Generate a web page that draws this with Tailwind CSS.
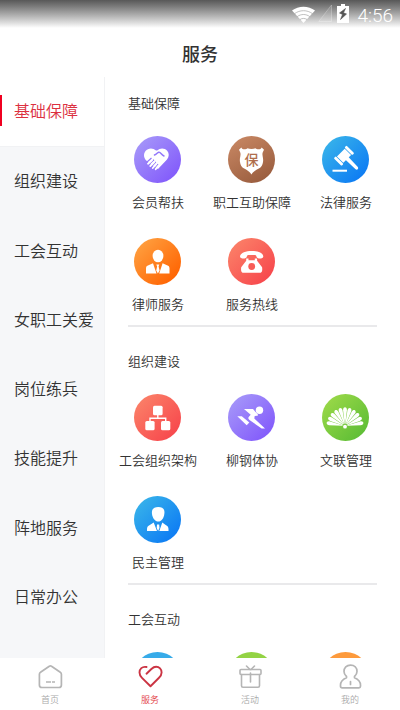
<!DOCTYPE html>
<html lang="zh-CN">
<head>
<meta charset="utf-8">
<meta name="viewport" content="width=device-width, initial-scale=1">
<title>服务</title>
<script src="https://cdn.jsdelivr.net/npm/@tailwindcss/browser@4"></script>
</head>
<body class="flex h-screen flex-col overflow-hidden bg-white font-['Noto_Sans_CJK_SC',sans-serif] font-[350] text-[#333]">

<svg class="absolute size-0" aria-hidden="true">
  <defs>
    <linearGradient id="purple" x1="0" y1="0" x2="1" y2="1"><stop offset=".1" stop-color="#a596f9"/><stop offset=".9" stop-color="#8259fb"/></linearGradient>
    <linearGradient id="brown" x1="0" y1="0" x2="0.6" y2="1"><stop offset="0" stop-color="#cb8a66"/><stop offset="1" stop-color="#9c5f40"/></linearGradient>
    <linearGradient id="blue" x1="0" y1="0" x2="1" y2="1"><stop offset=".1" stop-color="#37b2ea"/><stop offset=".9" stop-color="#0c7af4"/></linearGradient>
    <linearGradient id="orange" x1="0" y1="0" x2="1" y2="1"><stop offset=".1" stop-color="#ff9f3f"/><stop offset=".9" stop-color="#ff6200"/></linearGradient>
    <linearGradient id="red" x1="0" y1="0" x2="1" y2="1"><stop offset=".1" stop-color="#fb8068"/><stop offset=".9" stop-color="#f7464c"/></linearGradient>
    <linearGradient id="green" x1="0" y1="0" x2="1" y2="1"><stop offset=".1" stop-color="#9ad848"/><stop offset=".9" stop-color="#5cbd35"/></linearGradient>
  </defs>
</svg>

<header>
  <div class="flex h-7 items-start justify-end bg-linear-to-b from-[#585858] to-white pr-[7px] pt-1 text-white">
    <svg class="mt-[2px] h-[17px] w-[23px]" viewBox="0 0 23 17" aria-hidden="true"><path d="M0 4.5C6.500-.6 16.500-.6 23 4.500L11.500 17z" fill="#fff"/><path d="M2.500 7.700c5.400-4 12.600-4 18 0M5.200 10.600c3.900-2.800 8.700-2.800 12.600 0M8 13.500c2-1.400 5-1.400 7 0" stroke="#a5a5a5" stroke-width=".7" fill="none"/></svg>
    <svg class="ml-[3px] h-[18px] w-[14px]" viewBox="0 0 14 18" aria-hidden="true"><path d="M13.500 1v16.500H.8z" fill="#fff" fill-opacity=".1" stroke="#fff" stroke-opacity=".25"/></svg>
    <svg class="ml-[5px] h-[19px] w-[12px]" viewBox="0 0 12 19" aria-hidden="true"><path d="M4 0h4v2h4v17H0V2h4z" fill="#fff"/><path d="M8.500 4.500 2.500 9l3 1.500L3.500 15.500l6-5.500-3-1.200z" fill="#555" stroke="#555" stroke-width=".6"/></svg>
    <span class="ml-[8px] mt-[2px] font-[Roboto,sans-serif] text-[19px] leading-5 font-light">4:56</span>
  </div>
  <h1 class="text-center text-lg leading-[50px] font-medium">服务</h1>
</header>

<main class="-mt-px flex min-h-0 flex-1">
  <aside class="w-[105px] shrink-0 border-r border-[#f1f2f4] bg-[#f6f7f9]">
    <ul class="flex h-full flex-col pb-[26px] text-base text-[#333]">
      <li class="flex-1 border-b border-[#f1f2f4] bg-white"><a href="#" aria-current="true" class="relative flex h-full items-center pb-[3px] pl-[14px] whitespace-nowrap text-[#dc3040] before:absolute before:left-0 before:h-[31px] before:w-[2px] before:bg-[#f00020]">基础保障</a></li>
      <li class="flex-1"><a href="#" class="flex h-full items-center pb-[3px] pl-[14px] whitespace-nowrap">组织建设</a></li>
      <li class="flex-1"><a href="#" class="flex h-full items-center pb-[3px] pl-[14px] whitespace-nowrap">工会互动</a></li>
      <li class="flex-1"><a href="#" class="flex h-full items-center pb-[3px] pl-[14px] whitespace-nowrap">女职工关爱</a></li>
      <li class="flex-1"><a href="#" class="flex h-full items-center pb-[3px] pl-[14px] whitespace-nowrap">岗位练兵</a></li>
      <li class="flex-1"><a href="#" class="flex h-full items-center pb-[3px] pl-[14px] whitespace-nowrap">技能提升</a></li>
      <li class="flex-1"><a href="#" class="flex h-full items-center pb-[3px] pl-[14px] whitespace-nowrap">阵地服务</a></li>
      <li class="flex-1"><a href="#" class="flex h-full items-center pb-[3px] pl-[14px] whitespace-nowrap">日常办公</a></li>
    </ul>
  </aside>

  <div class="min-w-0 flex-1 overflow-hidden pr-[7px] pl-[6px] text-[13px] leading-5 text-[#333]">
    <section class="pt-4">
      <h2 class="pl-[17px]">基础保障</h2>
      <div class="mt-[23px] grid grid-cols-3 gap-y-[26px]">
        <a href="#" class="flex flex-col items-center gap-[9px] whitespace-nowrap">
          <svg class="mr-px size-[47px]" viewBox="0 0 47 47" aria-hidden="true"><circle cx="23.500" cy="23.500" r="23.500" fill="url(#purple)"/>
            <path d="M22 14.500c-3-3-8-2.700-10.500.5-2.200 3-1.800 6.600.5 9.200l2.500 2.300L24 33l9-9.500c2.300-2.700 2.300-6.200.2-8.700-2.600-3.100-7.200-3.100-10-.3z" fill="#fff"/>
            <path d="M20.500 19c2.200-.8 2.800-2.300 4.200-2.800 2-.5 2.500 2.500 5.300 3.800" fill="none" stroke="#9278fa" stroke-width="1.500" stroke-linecap="round"/>
            <path d="m12.500 26.500 5-4.500M14.600 28.700l5.400-5M17 31l4.800-5M20 33l4-5" stroke="#9278fa" stroke-width="1.200"/>
            <path d="m14 27.700 4-3.500M16.300 30l4-4M18.800 32l3.500-4M21.700 33.200l2.300-2.700" stroke="#fff" stroke-width="1.800" stroke-linecap="round"/></svg>
          <span>会员帮扶</span></a>
        <a href="#" class="flex flex-col items-center gap-[9px] whitespace-nowrap">
          <svg class="mr-px size-[47px]" viewBox="0 0 47 47" aria-hidden="true"><circle cx="23.500" cy="23.500" r="23.500" fill="url(#brown)"/>
            <path d="M13.300 11.500c.8 2.300 4.700 2.300 6.200.8 2.200 1 5.800 1 8 0 1.500 1.500 5.400 1.500 6.200-.8l2.300 2.300c-1 2-1.800 3-1.500 5.200.2 2.500 1 4 .5 7-.4 3-1.500 5-3.700 6.200-3.300 1.800-6 3.200-7.800 6.300-1.800-3.100-4.500-4.500-7.800-6.300C13.500 31 12.400 29 12 26c-.5-3 .3-4.500.5-7 .3-2.200-.5-3.200-1.500-5.200z" fill="#fff"/>
            <text x="23.500" y="29" text-anchor="middle" font-size="14" font-weight="500" fill="#b06e4c">保</text></svg>
          <span>职工互助保障</span></a>
        <a href="#" class="flex flex-col items-center gap-[9px] whitespace-nowrap">
          <svg class="mr-px size-[47px]" viewBox="0 0 47 47" aria-hidden="true"><circle cx="23.500" cy="23.500" r="23.500" fill="url(#blue)"/>
            <g fill="#fff"><g transform="translate(22 19.700) rotate(45)"><rect x="-4.500" y="-5.500" width="9" height="11"/><rect x="-5.500" y="-9" width="11" height="2.800" rx="1"/><rect x="-5.500" y="6.200" width="11" height="2.800" rx="1"/></g>
            <path d="m25.500 20 10.300 11c1.200 1.600-.6 3.500-2.200 2.300L22.700 23z"/><rect x="10.500" y="33.700" width="14.500" height="2"/></g></svg>
          <span>法律服务</span></a>
        <a href="#" class="flex flex-col items-center gap-[9px] whitespace-nowrap">
          <svg class="mr-px size-[47px]" viewBox="0 0 47 47" aria-hidden="true"><circle cx="23.500" cy="23.500" r="23.500" fill="url(#orange)"/>
            <g fill="#fff"><ellipse cx="24" cy="18" rx="5.400" ry="6.300"/><path d="M19 25.200 22.500 35.500H12v-5c0-2 .8-2.700 2.500-3.200zM28.600 25.200 25.200 35.500h10.300v-5c0-2-.8-2.700-2.500-3.200zM22.300 26.500h3l-.7 2 1 4-1.700 3-1.700-3 .9-4z"/></g></svg>
          <span>律师服务</span></a>
        <a href="#" class="flex flex-col items-center gap-[9px] whitespace-nowrap">
          <svg class="mr-px size-[47px]" viewBox="0 0 47 47" aria-hidden="true"><circle cx="23.500" cy="23.500" r="23.500" fill="url(#red)"/>
            <path d="M12 18.500c0-7.500 23.300-7.500 23.300 0 0 2.500-6.300 2.800-6.800.3-.2-1.300-.5-1.500-1.500-1.700h-6.700c-1 .2-1.300.4-1.500 1.700-.5 2.500-6.800 2.200-6.800-.3z" fill="#fff"/>
            <path d="M18.200 20.500h2.300v1.800h6.300v-1.800h2.300v2.300l5 6.500c.5 4-.2 5.400-2.600 5.400H15.800c-2.400 0-3.100-1.400-2.600-5.400l5-6.500z" fill="#fff"/><circle cx="23.700" cy="28.500" r="3.400" fill="#f85c57"/></svg>
          <span>服务热线</span></a>
      </div>
      <hr class="mt-[11px] mr-4 mb-2 ml-[17px] border-t-2 border-[#e9e9eb]">
    </section>

    <section class="pt-4">
      <h2 class="pl-[17px]">组织建设</h2>
      <div class="mt-[23px] grid grid-cols-3 gap-y-[26px]">
        <a href="#" class="flex flex-col items-center gap-[9px] whitespace-nowrap">
          <svg class="mr-px size-[47px]" viewBox="0 0 47 47" aria-hidden="true"><circle cx="23.500" cy="23.500" r="23.500" fill="url(#red)"/>
            <g fill="#fff"><rect x="19" y="11.700" width="9.600" height="9.600" rx="1.500"/><rect x="11.300" y="27" width="9.300" height="9.300" rx="1.500"/><rect x="27" y="27" width="9.300" height="9.300" rx="1.500"/></g><path d="M23.800 21v3.200M16 27.500v-3.300h15.700v3.300" fill="none" stroke="#fff" stroke-width="1.400"/></svg>
          <span>工会组织架构</span></a>
        <a href="#" class="flex flex-col items-center gap-[9px] whitespace-nowrap">
          <svg class="mr-px size-[47px]" viewBox="0 0 47 47" aria-hidden="true"><circle cx="23.500" cy="23.500" r="23.500" fill="url(#purple)"/>
            <g fill="#fff"><circle cx="31.500" cy="16.200" r="3.700"/><path d="M16 15h9l4.700 5.300c.5.800 0 1.500-.8 1.500l-2.200.2-.4 2.500L37 34.500h-3.300L21.500 26c-1.500-1.200-1.500-2.300-.6-3.300l1.800-2z"/><path d="M9.300 22.300h4.500l7.500 6.200-2.600 2.700z"/></g></svg>
          <span>柳钢体协</span></a>
        <a href="#" class="flex flex-col items-center gap-[9px] whitespace-nowrap">
          <svg class="mr-px size-[47px]" viewBox="0 0 47 47" aria-hidden="true"><defs><path id="petal" d="M22.700 29.500 21.100 16.500c-.4-4.200 4.200-4.200 3.800 0L23.300 29.500z"/></defs><circle cx="23.500" cy="23.500" r="23.500" fill="url(#green)"/>
            <g fill="#fff"><use href="#petal"/><use href="#petal" transform="rotate(16 23 32)"/><use href="#petal" transform="rotate(32 23 32)"/><use href="#petal" transform="rotate(48 23 32)"/><use href="#petal" transform="rotate(64 23 32)"/><use href="#petal" transform="rotate(80 23 32)"/><use href="#petal" transform="rotate(-16 23 32)"/><use href="#petal" transform="rotate(-32 23 32)"/><use href="#petal" transform="rotate(-48 23 32)"/><use href="#petal" transform="rotate(-64 23 32)"/><use href="#petal" transform="rotate(-80 23 32)"/><circle cx="23" cy="32.700" r="1.900"/></g></svg>
          <span>文联管理</span></a>
        <a href="#" class="flex flex-col items-center gap-[9px] whitespace-nowrap">
          <svg class="mr-px size-[47px]" viewBox="0 0 47 47" aria-hidden="true"><circle cx="23.500" cy="23.500" r="23.500" fill="url(#blue)"/>
            <g fill="#fff"><path d="M18 18c-.6-4.500 1.500-7 6.300-7s6.800 2.500 6 7c-.3 4-2.900 7.600-6 7.600S18.400 22 18 18z"/><path d="M19.700 26.500 23 35H13v-2c0-2 1-3.300 2.800-4zM28.300 26.500 25.300 35h9.200v-2c0-2-1-3.300-2.800-4zM23 28.500h2.200l.3 3.500-1.400 3-1.400-3z"/></g></svg>
          <span>民主管理</span></a>
      </div>
      <hr class="mt-[11px] mr-4 mb-2 ml-[17px] border-t-2 border-[#e9e9eb]">
    </section>

    <section class="pt-4">
      <h2 class="pl-[17px]">工会互动</h2>
      <div class="mt-[23px] grid grid-cols-3 justify-items-center">
        <div class="mr-px size-[47px] rounded-full bg-[#37abe9]"></div>
        <div class="mr-px size-[47px] rounded-full bg-[#93d344]"></div>
        <div class="mr-px size-[47px] rounded-full bg-[#fd9a3c]"></div>
      </div>
    </section>
  </div>
</main>

<nav class="grid h-[52px] shrink-0 grid-cols-4 bg-white pt-[6px] text-[9px] leading-3 text-[#aaa]">
  <a href="#" class="flex flex-col items-center gap-[5px]">
    <svg class="size-[25px]" viewBox="0 0 25 25" fill="none" stroke="#b5b5b5" stroke-width="1.700" stroke-linejoin="round" aria-hidden="true"><path d="M11.300 2.200 2.500 8.300c-.8.500-1.100 1-1.100 2V21c0 1.700.8 2.500 2.500 2.500h17c1.700 0 2.500-.8 2.500-2.500V10.300c0-1-.3-1.500-1.100-2l-8.800-6.100c-.8-.5-1.400-.5-2.200 0zM8 18h5M14 18h3"/></svg>
    <span>首页</span></a>
  <a href="#" aria-current="page" class="flex flex-col items-center gap-[5px] text-[#e23a3f]">
    <svg class="size-[25px]" viewBox="0 0 25 25" fill="none" stroke="#cb3443" stroke-width="1.900" stroke-linecap="round" stroke-linejoin="round" aria-hidden="true"><path d="M8.500 3C4 2.200 1.500 5 1.500 8.500c0 2.300.9 3.700 2.500 5.300l8.500 8.400 8.500-8.400c1.700-1.700 2.600-3.200 2.600-5.300 0-3.400-2.300-5.700-5.500-5.700-2.200 0-3.300.9-4.700 2.200L8.500 9.700"/></svg>
    <span>服务</span></a>
  <a href="#" class="flex flex-col items-center gap-[5px]">
    <svg class="size-[25px]" viewBox="0 0 25 25" fill="none" stroke="#b5b5b5" stroke-width="1.600" stroke-linecap="round" stroke-linejoin="round" aria-hidden="true"><rect x="2" y="5.500" width="21" height="5" rx="1"/><path d="M3.500 10.500v11.300c0 1 .5 1.500 1.500 1.500h15c1 0 1.500-.5 1.500-1.500V10.500M12.500 9v9M8.500 2l3.500 3.500M16.500 2 13 5.500"/></svg>
    <span>活动</span></a>
  <a href="#" class="flex flex-col items-center gap-[5px]">
    <svg class="size-[25px]" viewBox="0 0 25 25" fill="none" stroke="#b5b5b5" stroke-width="1.700" stroke-linecap="round" stroke-linejoin="round" aria-hidden="true"><path d="M8.500 12.500c-1.700-1.500-2.500-3-2.500-5 0-3.700 2.500-6.400 6.500-6.400S19 3.800 19 7.500c0 2-.8 3.500-2.500 5v1.200c4.500 2 6 4 6 7.300v1.200c0 1-.6 1.600-1.600 1.600H4.100c-1 0-1.600-.6-1.600-1.600V21c0-3.300 1.500-5.300 6-7.300zM12.500 17.500v3"/></svg>
    <span>我的</span></a>
</nav>
</body>
</html>
